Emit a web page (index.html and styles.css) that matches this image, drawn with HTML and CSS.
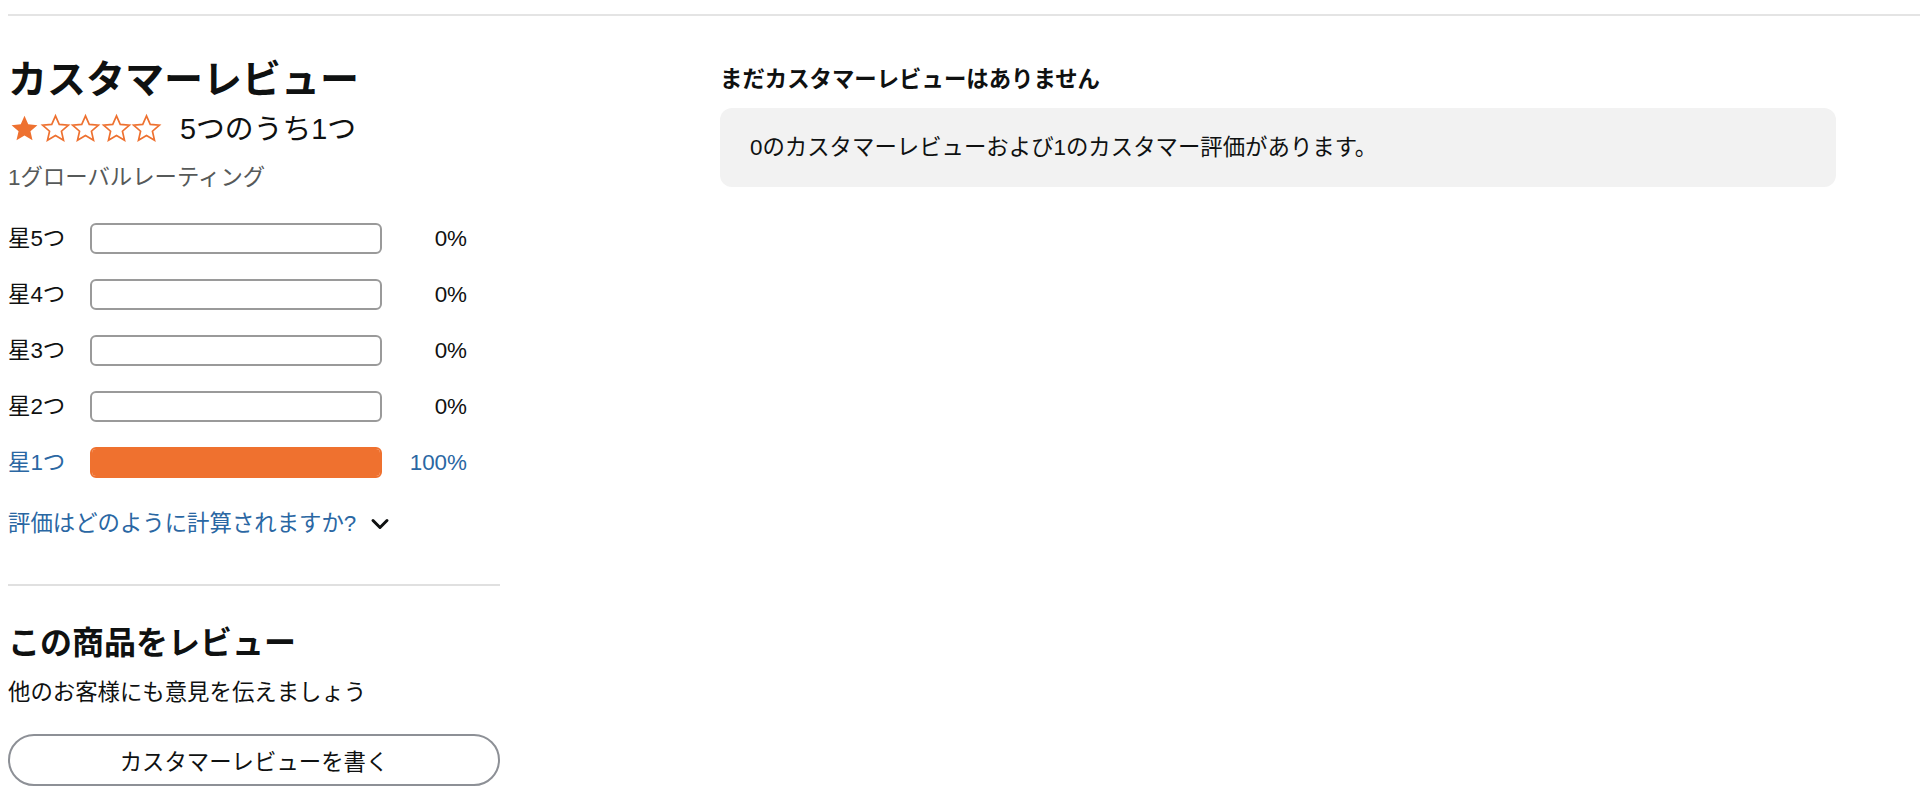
FILE: index.html
```html
<!DOCTYPE html>
<html lang="ja">
<head>
<meta charset="utf-8">
<title>カスタマーレビュー</title>
<link rel="stylesheet" href="styles.css">
</head>
<body>
<div class="topline"></div>
<div class="main">
  <div class="left">
    <h2 class="heading">カスタマーレビュー</h2>
    <div class="rating-row">
      <span class="stars">
        <svg class="star" viewBox="0 0 24 24"><path d="M12 2.2l2.9 6.6 7.1.6-5.4 4.7 1.6 7-6.2-3.7-6.2 3.7 1.6-7L2 9.4l7.1-.6z" fill="#ee7130"/></svg>
        <svg class="star" viewBox="0 0 24 24"><path d="M12 2.2l2.9 6.6 7.1.6-5.4 4.7 1.6 7-6.2-3.7-6.2 3.7 1.6-7L2 9.4l7.1-.6z" fill="none" stroke="#ee7130" stroke-width="1.3" stroke-linejoin="miter"/></svg>
        <svg class="star" viewBox="0 0 24 24"><path d="M12 2.2l2.9 6.6 7.1.6-5.4 4.7 1.6 7-6.2-3.7-6.2 3.7 1.6-7L2 9.4l7.1-.6z" fill="none" stroke="#ee7130" stroke-width="1.3" stroke-linejoin="miter"/></svg>
        <svg class="star" viewBox="0 0 24 24"><path d="M12 2.2l2.9 6.6 7.1.6-5.4 4.7 1.6 7-6.2-3.7-6.2 3.7 1.6-7L2 9.4l7.1-.6z" fill="none" stroke="#ee7130" stroke-width="1.3" stroke-linejoin="miter"/></svg>
        <svg class="star" viewBox="0 0 24 24"><path d="M12 2.2l2.9 6.6 7.1.6-5.4 4.7 1.6 7-6.2-3.7-6.2 3.7 1.6-7L2 9.4l7.1-.6z" fill="none" stroke="#ee7130" stroke-width="1.3" stroke-linejoin="miter"/></svg>
      </span>
      <span class="rating-text">5つのうち1つ</span>
    </div>
    <div class="global">1グローバルレーティング</div>
    <div class="histogram">
      <div class="hrow"><span class="hlabel">星5つ</span><span class="meter"></span><span class="hpct">0%</span></div>
      <div class="hrow"><span class="hlabel">星4つ</span><span class="meter"></span><span class="hpct">0%</span></div>
      <div class="hrow"><span class="hlabel">星3つ</span><span class="meter"></span><span class="hpct">0%</span></div>
      <div class="hrow"><span class="hlabel">星2つ</span><span class="meter"></span><span class="hpct">0%</span></div>
      <div class="hrow link"><span class="hlabel">星1つ</span><span class="meter"><span class="fill" style="width:100%"></span></span><span class="hpct">100%</span></div>
    </div>
    <div class="howcalc">
      <span class="howtext">評価はどのように計算されますか?</span>
      <svg class="chev" viewBox="0 0 20 14"><polyline points="3,3.5 10,10.5 17,3.5" fill="none" stroke="#0f1111" stroke-width="3" stroke-linecap="round" stroke-linejoin="round"/></svg>
    </div>
    <hr class="divider">
    <h3 class="subheading">この商品をレビュー</h3>
    <div class="share">他のお客様にも意見を伝えましょう</div>
    <button class="write">カスタマーレビューを書く</button>
  </div>
  <div class="right">
    <h3 class="none-title">まだカスタマーレビューはありません</h3>
    <div class="none-box">0のカスタマーレビューおよび1のカスタマー評価があります。</div>
  </div>
</div>
</body>
</html>
```

FILE: styles.css
```css
html, body {
  margin: 0;
  padding: 0;
  background: #ffffff;
}
body {
  font-family: "Liberation Sans", "Noto Sans CJK JP", sans-serif;
  color: #0f1111;
  font-size: 22.4px;
  line-height: 32px;
}
.topline {
  margin: 14px 0 0 8px;
  border-top: 2px solid #e4e4e4;
}
.main {
  display: flex;
  align-items: flex-start;
  padding-left: 8px;
}
.left {
  width: 492px;
  display: flex;
  flex-direction: column;
}
.heading {
  margin: 40px 0 0 0;
  font-size: 39px;
  line-height: 48px;
  font-weight: 700;
}
.rating-row {
  margin-top: 6px;
  display: flex;
  align-items: center;
  height: 36px;
}
.stars {
  display: flex;
  align-items: center;
  margin-left: 1px;
}
.star {
  width: 31px;
  height: 31px;
  display: block;
  margin-right: -0.4px;
}
.rating-text {
  margin-left: 18px;
  font-size: 28.8px;
  line-height: 36px;
  position: relative;
  top: 1px;
}
.global {
  margin-top: 16px;
  color: #565959;
}
.histogram {
  margin-top: 29px;
  display: flex;
  flex-direction: column;
  gap: 25px;
}
.hrow {
  display: flex;
  align-items: center;
  height: 31px;
}
.hlabel {
  width: 82px;
}
.meter {
  width: 292px;
  height: 31px;
  box-sizing: border-box;
  border: 2px solid #9a9a9a;
  border-radius: 6px;
  overflow: hidden;
  display: block;
}
.fill {
  display: block;
  height: 100%;
  background: #ef712f;
}
.hrow.link .meter {
  border-color: #ef712f;
}
.hpct {
  width: 85px;
  text-align: right;
}
.hrow.link {
  color: #2a67a3;
}
.howcalc {
  margin-top: 30px;
  display: flex;
  align-items: center;
  color: #2a67a3;
}
.chev {
  width: 20px;
  height: 14px;
  margin-left: 14px;
  display: block;
}
.divider {
  margin: 44px 0 0 0;
  border: 0;
  border-top: 2px solid #e0e0e0;
  width: 492px;
}
.subheading {
  margin: 35px 0 0 0;
  font-size: 32px;
  line-height: 44px;
  font-weight: 700;
}
.share {
  margin-top: 12px;
}
.write {
  margin-top: 25px;
  width: 492px;
  height: 52px;
  box-sizing: border-box;
  border: 2px solid #8d9096;
  border-radius: 26px;
  background: #ffffff;
  font-family: inherit;
  font-size: 22.4px;
  color: #0f1111;
  padding: 0;
}
.right {
  margin-left: 220px;
  width: 1116px;
}
.none-title {
  margin: 48px 0 0 0;
  font-size: 22.4px;
  line-height: 32px;
  font-weight: 700;
}
.none-box {
  margin-top: 12px;
  height: 79px;
  box-sizing: border-box;
  background: #f2f2f2;
  border-radius: 12px;
  padding: 0 30px;
  display: flex;
  align-items: center;
}
```
